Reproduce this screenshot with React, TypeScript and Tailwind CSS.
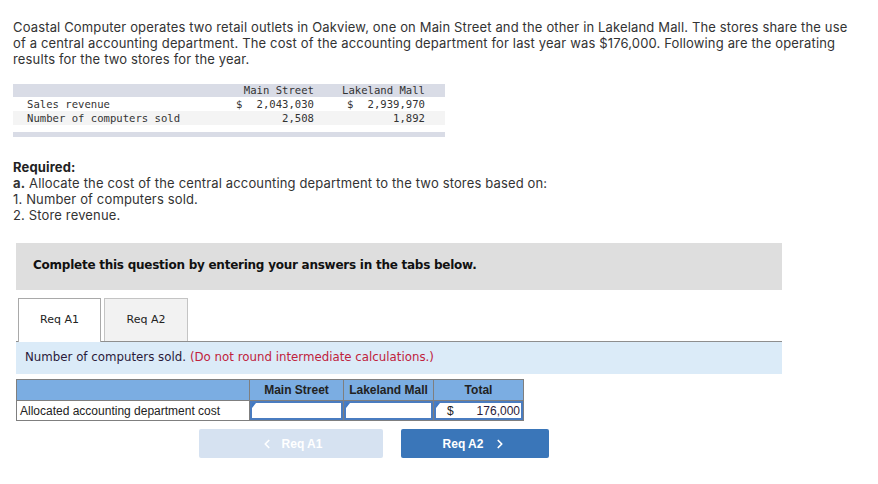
import { ChevronLeft, ChevronRight } from 'lucide-react'

const body = { fontFamily: 'Inter, "Open Sans", sans-serif' }
const mono = { fontFamily: '"DejaVu Sans Mono", monospace' }
const verdana = { fontFamily: '"DejaVu Sans", Verdana, sans-serif' }
const arial = { fontFamily: '"Liberation Sans", Arial, sans-serif' }

function InputCell({ children }: { children?: React.ReactNode }) {
  return (
    <td className="relative border border-[#7f7f7f] p-0">
      <div className="relative h-[19px] border-2 border-[#4a7cc0] bg-white px-[12px] flex items-center">
        <span className="absolute left-0 top-0 w-0 h-0 border-t-[5px] border-t-[#3e78c4] border-r-[4px] border-r-transparent" />
        {children}
      </div>
    </td>
  )
}

export default function App() {
  return (
    <div className="w-[878px] h-[484px] bg-white text-[#222] px-[13px] pt-[19px]">
      {/* Problem text */}
      <p className="text-[13px] leading-[16px] text-[#333] whitespace-nowrap tracking-[0.15px]" style={body}>
        Coastal Computer operates two retail outlets in Oakview, one on Main Street and the other in Lakeland Mall. The stores share the use
        <br />
        of a central accounting department. The cost of the accounting department for last year was $176,000. Following are the operating
        <br />
        results for the two stores for the year.
      </p>

      {/* Data table */}
      <div className="mt-[17px] w-[432px] text-[10.6px] text-[#333] whitespace-nowrap" style={mono}>
        <div className="flex h-[13px] leading-[13px] bg-[#d9dce6]">
          <div className="w-[223px]" />
          <div className="w-[78px] text-right">Main Street</div>
          <div className="w-[111px] text-right">Lakeland Mall</div>
        </div>
        <div className="flex h-[14px] leading-[14px] bg-white">
          <div className="w-[223px] pl-[14px]">Sales revenue</div>
          <div className="w-[78px] flex justify-between"><span>$</span><span>2,043,030</span></div>
          <div className="w-[111px] flex justify-between pl-[33px]"><span>$</span><span>2,939,970</span></div>
        </div>
        <div className="flex h-[14px] leading-[14px] bg-[#f4f4f4]">
          <div className="w-[223px] pl-[14px]">Number of computers sold</div>
          <div className="w-[78px] text-right">2,508</div>
          <div className="w-[111px] text-right">1,892</div>
        </div>
        <div className="mt-[7px] h-[5px] bg-[#d9dce6]" />
      </div>

      {/* Required */}
      <p className="mt-[22px] text-[13px] leading-[16px] text-[#333] tracking-[0.15px]" style={body}>
        <span className="font-bold text-[#222]">Required:</span>
        <br />
        <span className="font-bold">a.</span> Allocate the cost of the central accounting department to the two stores based on:
        <br />
        1. Number of computers sold.
        <br />
        2. Store revenue.
      </p>

      {/* Question area */}
      <div className="ml-[3px] w-[766px]">
        <div className="mt-[20px] h-[47px] bg-[#dedede] flex items-center pl-[17px] pb-[4px]">
          <span className="font-bold text-[12px] tracking-[-0.25px] text-[#111]" style={verdana}>
            Complete this question by entering your answers in the tabs below.
          </span>
        </div>

        {/* Tabs */}
        <div className="mt-[7px] flex gap-[3px] pl-[2px] h-[44px] items-end" style={verdana}>
          <div className="w-[83px] h-[44px] border border-b-0 border-[#a9a9a9] bg-white flex items-center justify-center text-[11px] text-[#222] relative -mb-[1px] z-10">
            Req A1
          </div>
          <div className="w-[84px] h-[43px] border border-b-0 border-[#c4c4c4] bg-[#f2f2f2] flex items-center justify-center text-[11px] text-[#222]">
            Req A2
          </div>
        </div>

        {/* Instruction bar */}
        <div className="border-t border-[#8e8e8e] bg-[#dbebf8] h-[33px] flex items-center pl-[9px] text-[11.8px]" style={verdana}>
          <span className="text-[#2a1a3a]">Number of computers sold.</span>
          <span className="ml-[4px] text-[#c0223c]">(Do not round intermediate calculations.)</span>
        </div>

        {/* Answer table */}
        <table className="mt-[5px] border-collapse text-[12px]" style={arial}>
          <thead>
            <tr className="bg-[#7badE2] h-[21px]">
              <th className="w-[233px] border border-[#7f7f7f]" />
              <th className="w-[94px] border border-[#7f7f7f] font-bold text-[#222]">Main Street</th>
              <th className="w-[90px] border border-[#7f7f7f] font-bold text-[#222]">Lakeland Mall</th>
              <th className="w-[90px] border border-[#7f7f7f] font-bold text-[#222]">Total</th>
            </tr>
          </thead>
          <tbody>
            <tr className="h-[20px]">
              <td className="border border-[#7f7f7f] pl-[3px] text-left text-[#222]">Allocated accounting department cost</td>
              <InputCell />
              <InputCell />
              <td className="relative border border-[#7f7f7f] p-0">
                <div className="relative h-[19px] border-2 border-[#4a7cc0] bg-white pl-[11px] pr-[1px] flex items-center justify-between text-[#222]">
                  <span className="absolute left-0 top-0 w-0 h-0 border-t-[5px] border-t-[#3e78c4] border-r-[4px] border-r-transparent" />
                  <span>$</span>
                  <span className="text-[#2a1a3a]">176,000</span>
                </div>
              </td>
            </tr>
          </tbody>
        </table>

        {/* Nav buttons */}
        <div className="mt-[8px] flex gap-[18px] pl-[183px]" style={arial}>
          <button className="w-[184px] h-[29px] rounded-[2px] bg-[#d6e2f1] text-white font-bold text-[12px] flex items-center justify-center gap-[8px]">
            <ChevronLeft className="w-[14px] h-[14px]" strokeWidth={3} />
            <span>Req A1</span>
          </button>
          <button className="w-[148px] h-[29px] rounded-[2px] bg-[#3a76b9] text-white font-bold text-[12px] flex items-center justify-center gap-[10px]">
            <span>Req A2</span>
            <ChevronRight className="w-[14px] h-[14px]" strokeWidth={3} />
          </button>
        </div>
      </div>
    </div>
  )
}
